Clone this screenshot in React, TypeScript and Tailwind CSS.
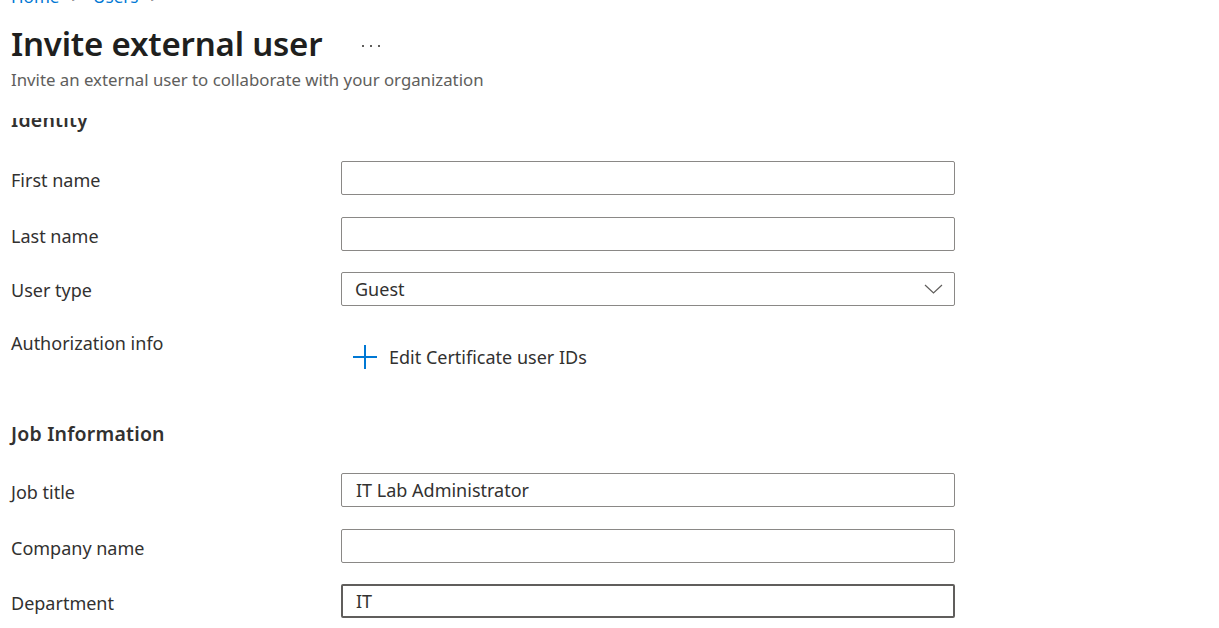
import React from "react";

const font = { fontFamily: '"Noto Sans", "Open Sans", Arial, sans-serif' };

function TextRow({ label, value, focused }: { label: string; value?: string; focused?: boolean }) {
  return (
    <div className="flex items-center h-[34px]">
      <div className="w-[330px] text-[18px] leading-[24px] text-[#323130] pt-[3px]">{label}</div>
      <div
        className={
          "w-[614px] h-[34px] rounded-[2px] bg-white flex items-center text-[18px] text-[#323130] " +
          (focused ? "border-2 border-[#605e5c] pl-[13px]" : "border border-[#8a8886] pl-[14px]")
        }
      >
        {value}
      </div>
    </div>
  );
}

export default function App() {
  return (
    <div className="w-[1219px] h-[628px] overflow-hidden bg-white flex flex-col" style={font}>
      {/* fixed header */}
      <div className="h-[118px] shrink-0 pl-[11px] overflow-hidden">
        <div className="-mt-[14px] h-[22px] text-[17px] leading-[22px] text-[#0078d4] flex items-center gap-[12px]">
          <span>Home</span>
          <span className="text-[#605e5c]">&gt;</span>
          <span>Users</span>
          <span className="text-[#605e5c]">&gt;</span>
        </div>
        <div className="mt-[15px] flex items-center h-[42px]">
          <h1 className="text-[33px] leading-[42px] font-semibold text-[#201f1e] tracking-[-0.2px]">Invite external user</h1>
          <div className="ml-[40px] mt-[4px] flex items-center gap-[6px]">
            <span className="w-[2px] h-[2px] bg-[#605e5c]" />
            <span className="w-[2px] h-[2px] bg-[#605e5c]" />
            <span className="w-[2px] h-[2px] bg-[#605e5c]" />
          </div>
        </div>
        <div className="mt-[4px] text-[16.8px] leading-[22px] text-[#605e5c]">
          Invite an external user to collaborate with your organization
        </div>
      </div>

      {/* scrolled content */}
      <div className="flex-1 overflow-hidden pl-[11px]">
        <div className="-mt-[10px] h-[24px] text-[19.5px] leading-[24px] font-semibold tracking-[0.2px] text-[#323130]">Identity</div>
        <div className="mt-[29px] flex flex-col">
          <TextRow label="First name" />
          <div className="mt-[22px]">
            <TextRow label="Last name" />
          </div>
          <div className="mt-[21px] flex items-center h-[34px]">
            <div className="w-[330px] text-[18px] leading-[24px] text-[#323130] pt-[2px]">User type</div>
            <div className="w-[614px] h-[34px] rounded-[2px] border border-[#8a8886] bg-white flex items-center justify-between pl-[13px] pr-[11px] text-[18px] text-[#323130]">
              <span>Guest</span>
              <svg width="19" height="10" viewBox="0 0 19 10" fill="none">
                <path d="M1 1 L9.5 9 L18 1" stroke="#605e5c" strokeWidth="1.2" />
              </svg>
            </div>
          </div>
        </div>
        <div className="mt-[25px] flex items-start">
          <div className="w-[330px] text-[18px] leading-[24px] text-[#323130]">Authorization info</div>
          <div className="mt-[11px] ml-[12px] flex items-center h-[30px]">
            <svg width="24" height="24" viewBox="0 0 24 24" fill="none">
              <path d="M12 0 V24 M0 12 H24" stroke="#0078d4" strokeWidth="2" />
            </svg>
            <span className="ml-[12px] text-[18px] text-[#323130]">Edit Certificate user IDs</span>
          </div>
        </div>
        <div className="mt-[50px] h-[24px] text-[19.5px] leading-[24px] font-semibold tracking-[0.2px] text-[#323130]">Job Information</div>
        <div className="mt-[27px] flex flex-col">
          <TextRow label="Job title" value="IT Lab Administrator" />
          <div className="mt-[22px]">
            <TextRow label="Company name" />
          </div>
          <div className="mt-[21px]">
            <TextRow label="Department" value="IT" focused />
          </div>
        </div>
      </div>
    </div>
  );
}
